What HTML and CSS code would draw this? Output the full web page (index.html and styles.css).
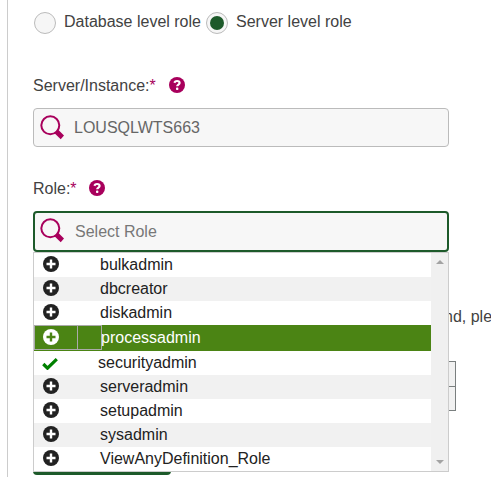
FILE: index.html
```html
<!DOCTYPE html>
<html lang="en">
<head>
<meta charset="utf-8">
<title>Role request</title>
<link rel="stylesheet" href="styles.css">
</head>
<body>
<svg class="defs" width="0" height="0">
  <symbol id="search" viewBox="0 0 24 25"><circle cx="10.3" cy="10.3" r="9" fill="none" stroke="#a8005c" stroke-width="2"/><path d="M14.3 18l3.7-3.4 6 5.9-3.3 3.7z" fill="#a8005c"/></symbol>
  <symbol id="help" viewBox="0 0 16 16"><circle cx="8" cy="8" r="8" fill="#a8005c"/><path d="M5.3 5.8C5.9 4.5 6.8 4 8 4c1.5 0 2.6.7 2.6 2 0 1.6-2.4 1.6-2.4 3.2" fill="none" stroke="#fff" stroke-width="2.2"/><rect x="7" y="10.6" width="2.4" height="2.4" rx=".8" fill="#fff"/></symbol>
  <symbol id="plus" viewBox="0 0 16 16"><circle cx="8" cy="8" r="8" fill="currentColor"/><path class="cross" d="M8 3.5v9M3.5 8h9" stroke-width="2.4"/></symbol>
  <symbol id="check" viewBox="0 0 16 12"><path d="M1.3 6l4.2 4.2L14.8 1.2" fill="none" stroke="#008000" stroke-width="3.2"/></symbol>
</svg>
<main class="panel">
  <div class="levels">
    <span class="radio"></span><span class="level">Database level role</span>
    <span class="radio on"></span><span class="level">Server level role</span>
  </div>
  <div class="label server">Server/Instance:<span class="req">*</span><svg class="help"><use href="#help"/></svg></div>
  <div class="field"><svg class="search"><use href="#search"/></svg><span>LOUSQLWTS663</span></div>
  <div class="label role">Role:<span class="req">*</span><svg class="help"><use href="#help"/></svg></div>
  <div class="combo">
    <div class="field focus"><svg class="search"><use href="#search"/></svg><span>Select Role</span></div>
    <div class="menu">
      <div class="options">
        <div class="option"><svg class="icon"><use href="#plus"/></svg><span>bulkadmin</span></div>
        <div class="option"><svg class="icon"><use href="#plus"/></svg><span>dbcreator</span></div>
        <div class="option"><svg class="icon"><use href="#plus"/></svg><span>diskadmin</span></div>
        <div class="option active"><span class="cell first"><svg class="icon"><use href="#plus"/></svg></span><span class="cell second"></span><span>processadmin</span></div>
        <div class="option checked"><svg class="tick"><use href="#check"/></svg><span>securityadmin</span></div>
        <div class="option"><svg class="icon"><use href="#plus"/></svg><span>serveradmin</span></div>
        <div class="option"><svg class="icon"><use href="#plus"/></svg><span>setupadmin</span></div>
        <div class="option"><svg class="icon"><use href="#plus"/></svg><span>sysadmin</span></div>
        <div class="option"><svg class="icon"><use href="#plus"/></svg><span>ViewAnyDefinition_Role</span></div>
      </div>
      <div class="scroll"><i class="up"></i><i class="down"></i></div>
    </div>
  </div>
  <div class="note">nd, ple</div>
  <div class="grid"><div></div><div></div></div>
  <div class="submit"></div>
</main>
</body>
</html>
```
FILE: styles.css
```css
* { box-sizing: border-box; }
body { margin: 0; background: #fff; color: #424242; font: 16px/24px "Liberation Sans", Arial, sans-serif; overflow: hidden; }
svg { display: block; flex: none; }
.defs { position: absolute; }
.panel { height: 477px; margin-left: 7px; padding-left: 25px; border-left: 1px solid #ccc; }
.levels { display: flex; align-items: center; height: 34px; padding: 12px 0 0 1px; }
.radio { display: flex; flex: none; width: 22px; height: 22px; border: 1px solid #bbb; border-radius: 50%; background: #f6f6f6; }
.radio.on { margin-left: 5px; }
.radio.on::after { content: ""; width: 14px; height: 14px; margin: 3px; border-radius: 50%; background: #1d5a2a; }
.level { width: 137px; margin: -3px 0 0 8px; white-space: nowrap; }
.on + .level { width: auto; }
.label { display: flex; height: 24px; }
.server { margin-top: 40px; margin-bottom: 10px; }
.role { margin-top: 30px; margin-bottom: 10px; }
.req { color: #a8005c; }
.help { width: 16px; height: 16px; margin: 3px 0 0 13px; }
.role .help { margin-left: 12px; }
.field { display: flex; width: 416px; height: 39px; padding: 6px; border: 1px solid #bbb; border-radius: 4px; background: #f7f7f7; color: #666; }
.field span { margin: 1px 0 0 10px; }
.search { width: 24px; height: 25px; }
.focus { height: 41px; padding: 5px; border: 2px solid #1d5a2a; color: #777; }
.focus span { margin: 2px 0 0 11px; }
.combo { position: relative; width: 416px; }
.menu { position: absolute; z-index: 2; top: 41px; left: 0; display: flex; width: 416px; height: 220px; border: 1px solid #ccc; background: #fff; }
.options { width: 397px; }
.option { --cross: #fff; display: flex; height: 24px; padding-left: 9px; color: #222; }
.option:nth-child(even) { background: #f1f1f1; }
.icon { width: 16px; height: 16px; margin: 3px 41px 0 0; color: #222; }
.cross { stroke: var(--cross); }
.option.active { --cross: #4b8414; height: 26px; padding: 0; background: #4b8414; color: #fff; }
.cell { width: 44px; height: 25px; border: 1px solid #aaa; }
.second { width: 24px; border-left: 0; }
.active .icon { margin: 3px 0 0 8px; color: #fff; }
.active > span:last-child { margin: 1px 0 0 -1px; }
.option.checked { padding-left: 8px; }
.tick { width: 16px; height: 12px; margin: 7px 40px 0 0; }
.scroll { display: flex; flex-direction: column; justify-content: space-between; align-items: center; width: 17px; padding: 7px 0; background: #f0f0f0; }
.up, .down { border: 4px solid transparent; border-top: 0; border-bottom: 4px solid #a3a3a3; }
.down { border-bottom: 0; border-top: 4px solid #a3a3a3; }
.note { margin: 53px 0 0 411px; white-space: nowrap; }
.grid { width: 423px; height: 50px; margin-top: 32px; border: 1px solid #7a7f7f; background: #f1f1f1; }
.grid div { height: 24px; }
.grid div + div { border-top: 1px solid #7a7f7f; }
.submit { width: 138px; height: 40px; margin-top: 24px; border-radius: 4px; background: #1d5a2a; }
```
